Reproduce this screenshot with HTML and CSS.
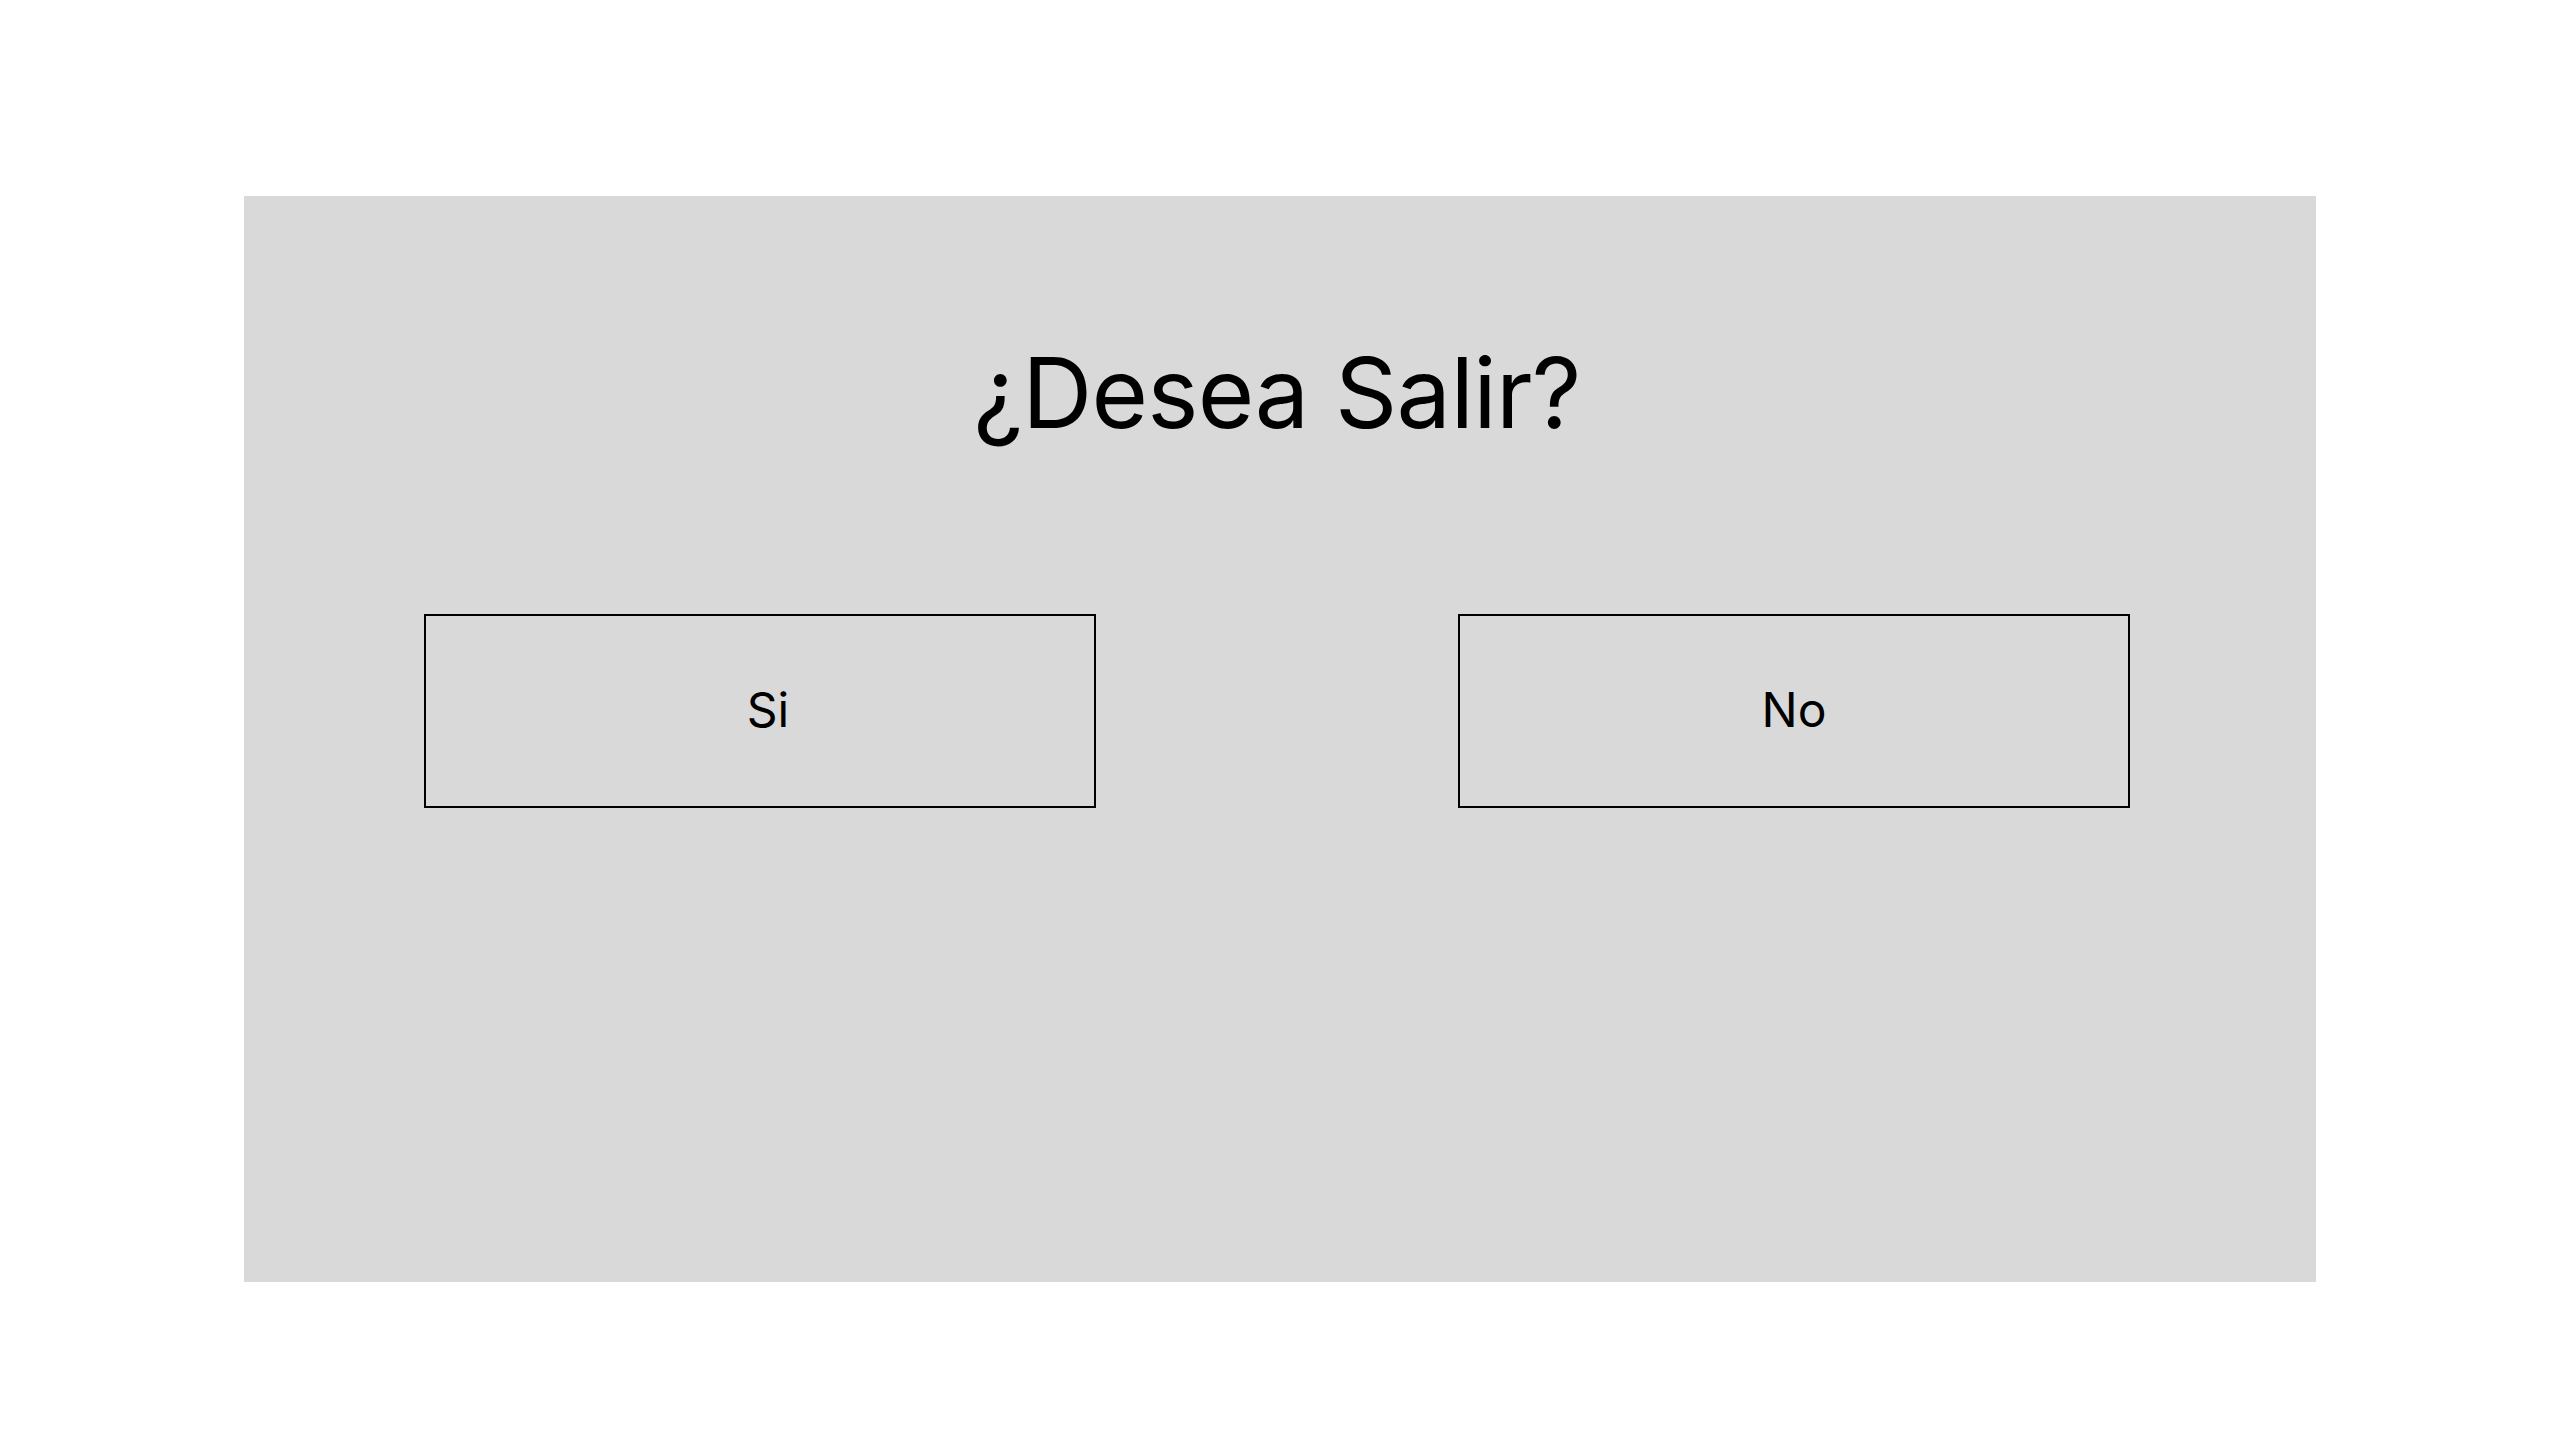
FILE: index.html
```html
<!DOCTYPE html>
<html lang="es">
<head>
<meta charset="utf-8">
<title>¿Desea Salir?</title>
<link rel="stylesheet" href="styles.css">
</head>
<body>
<main class="page">
  <section class="dialog">
    <h1 class="title">¿Desea Salir?</h1>
    <div class="actions">
      <button class="btn btn-yes">Si</button>
      <button class="btn">No</button>
    </div>
  </section>
</main>
</body>
</html>
```

FILE: styles.css
```css
* { box-sizing: border-box; }
html, body {
  margin: 0;
  padding: 0;
  background: #ffffff;
  font-family: Inter, "Noto Sans", sans-serif;
}
.page {
  width: 2560px;
  height: 1440px;
  padding: 196px 244px 0 244px;
}
.dialog {
  width: 2072px;
  height: 1086px;
  background: #d9d9d9;
  padding: 149px 186px 0 180px;
  display: flex;
  flex-direction: column;
}
.title {
  margin: 0 0 173px 0;
  font-size: 97px;
  line-height: 96px;
  font-weight: 400;
  letter-spacing: -0.007em;
  text-align: center;
  color: #000;
}
.actions {
  display: flex;
  justify-content: space-between;
}
.btn {
  width: 672px;
  height: 194px;
  border: 2px solid #000;
  background: transparent;
  font-family: Inter, "Noto Sans", sans-serif;
  font-size: 48px;
  font-weight: 400;
  color: #000;
  padding: 0 0 3px 0;
  border-radius: 0;
}
.btn-yes {
  padding-left: 16px;
}
```
